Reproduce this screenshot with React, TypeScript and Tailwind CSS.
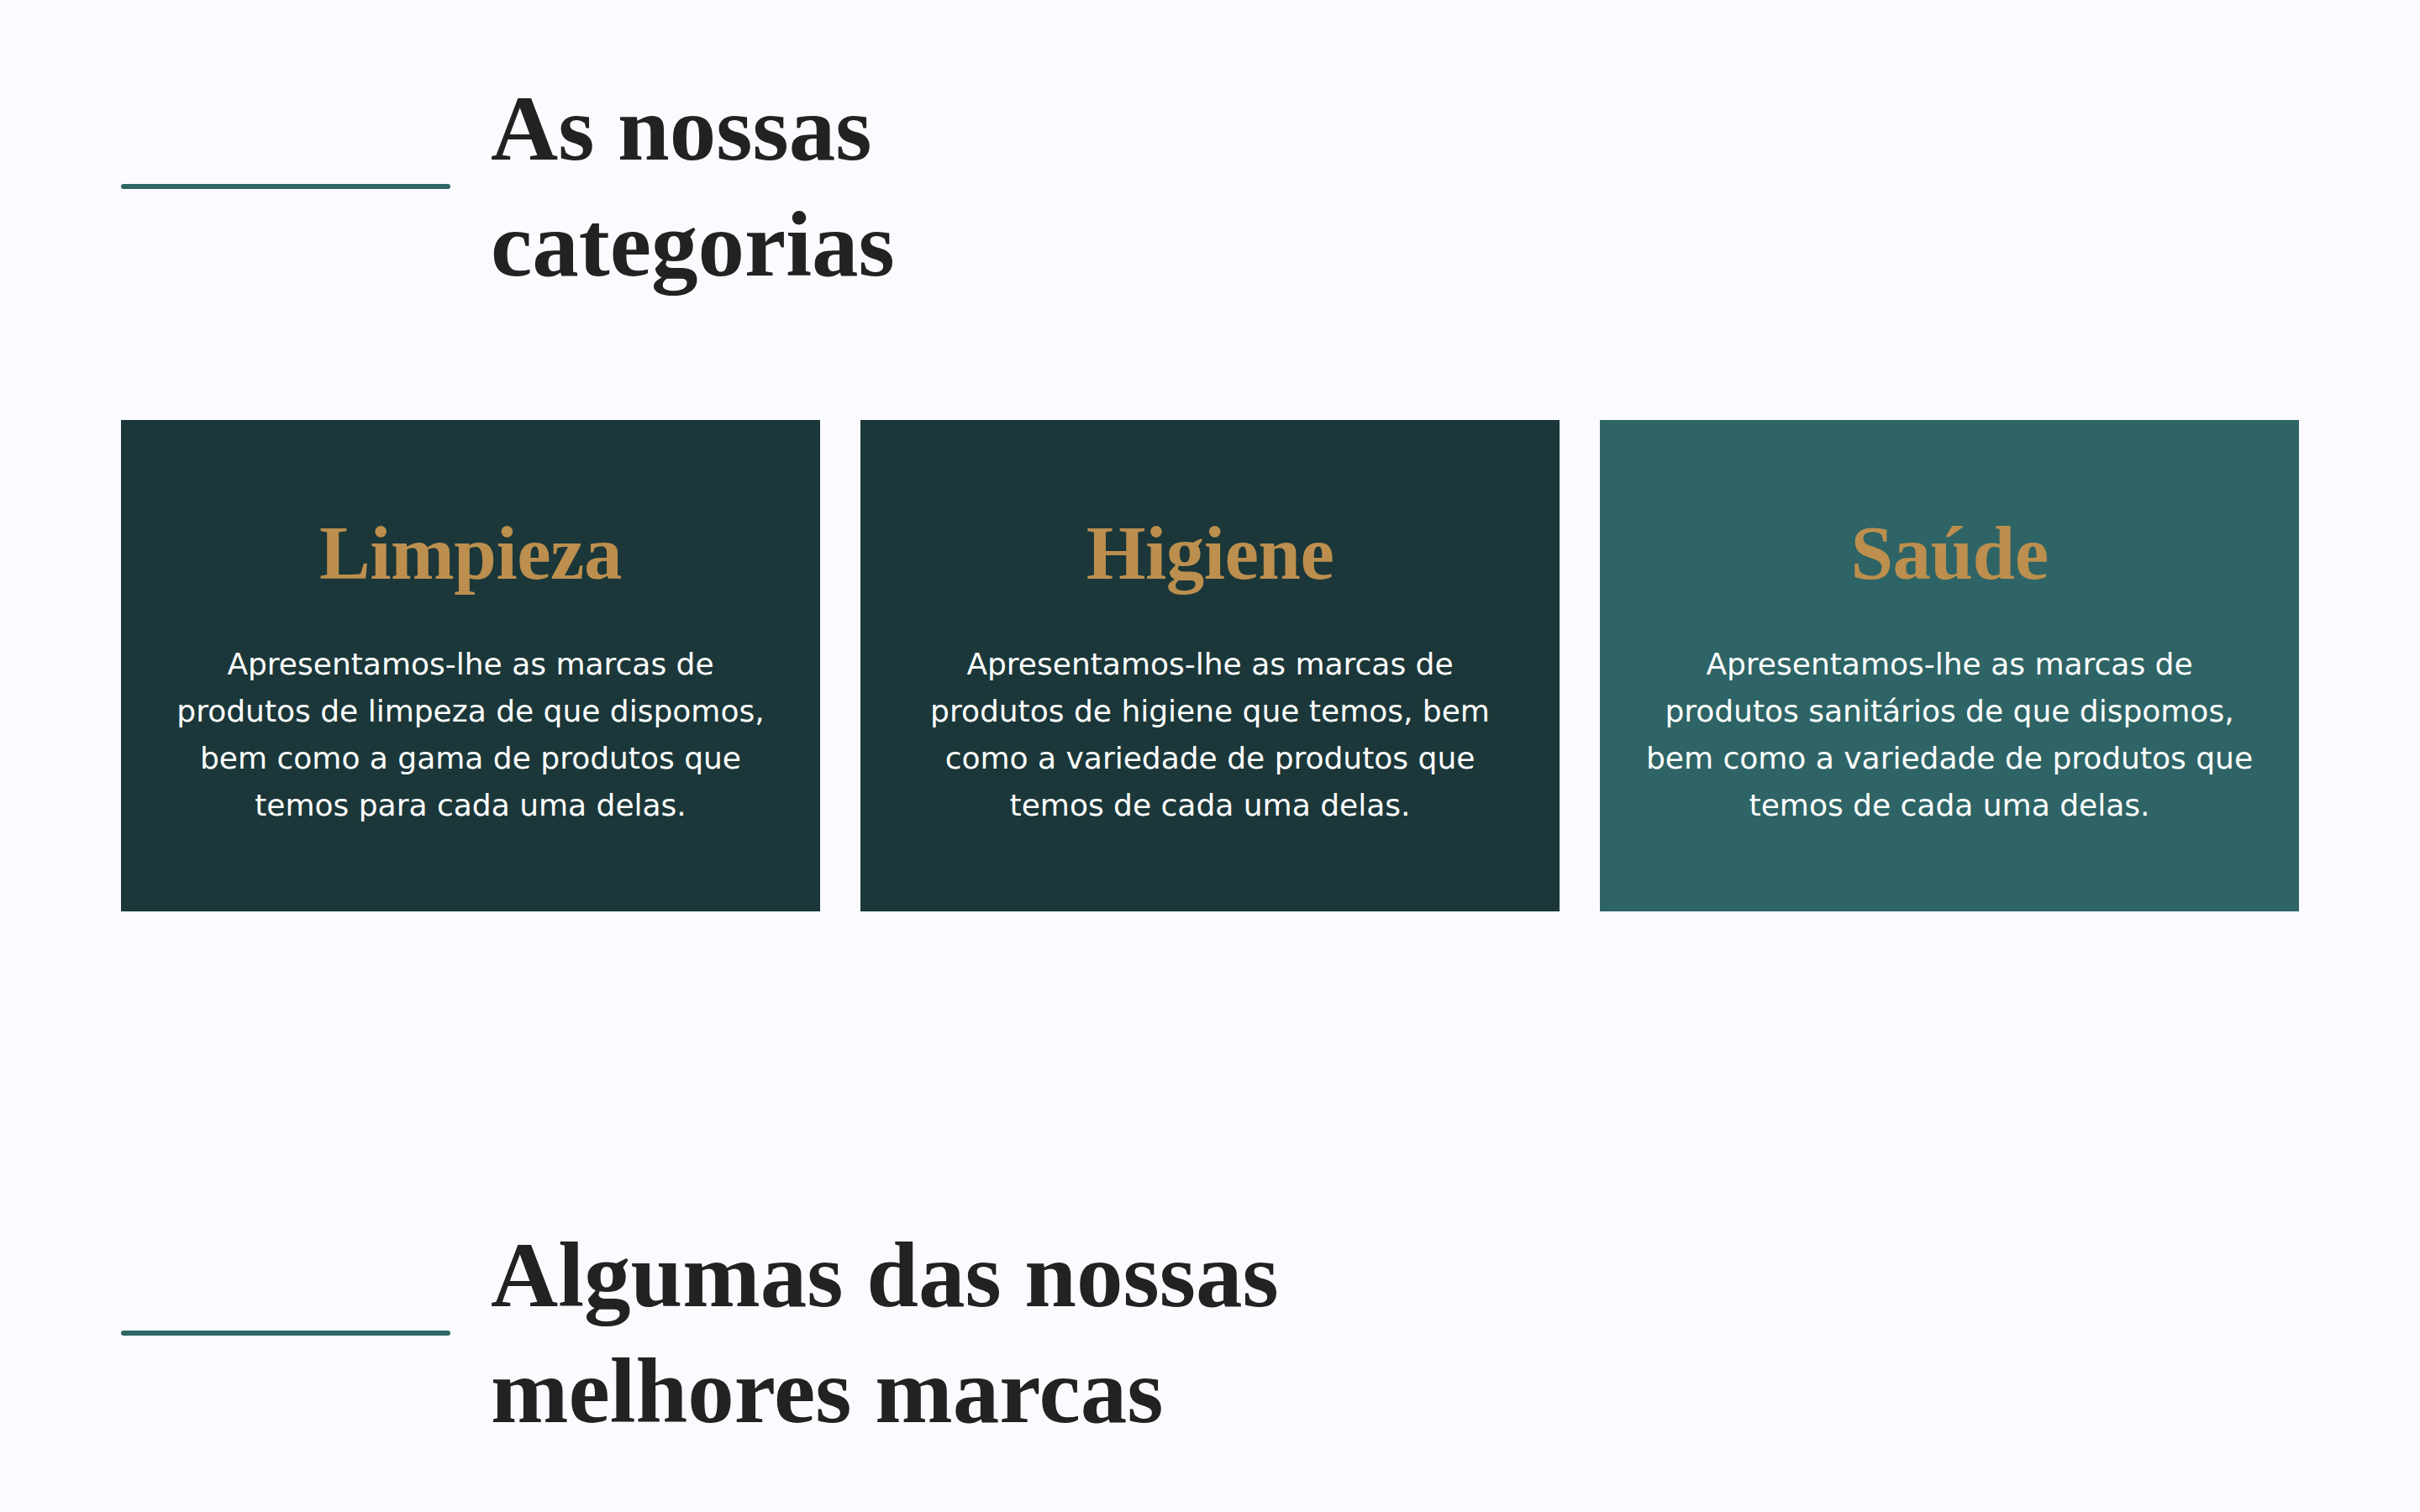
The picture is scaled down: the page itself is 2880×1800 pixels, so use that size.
import React from "react";

const serif = "font-['Liberation_Serif',serif]";

function SectionHeading({ lines }: { lines: string[] }) {
  return (
    <div className="flex items-center">
      <div className="h-[6px] w-[392px] shrink-0 rounded-full bg-[#2f6666]" />
      <h2
        className={`${serif} ml-[48px] text-[111px] font-bold leading-[138px] tracking-[0px] text-[#222222]`}
      >
        {lines.map((l, i) => (
          <span key={i} className="block">
            {l}
          </span>
        ))}
      </h2>
    </div>
  );
}

function Card({
  title,
  lines,
  bg,
}: {
  title: string;
  lines: string[];
  bg: string;
}) {
  return (
    <div className={`${bg} flex flex-col items-center pt-[104px] pb-[98px] text-center`}>
      <h3
        className={`${serif} text-[91px] font-bold leading-[109px] tracking-[-0.5px] text-[#bc8f4e]`}
      >
        {title}
      </h3>
      <p className="mt-[50px] font-['DejaVu_Sans',sans-serif] text-[36px] leading-[56px] text-white">
        {lines.map((l, i) => (
          <span key={i} className="block whitespace-nowrap">
            {l}
          </span>
        ))}
      </p>
    </div>
  );
}

export default function App() {
  return (
    <div className="min-h-screen bg-[#fbfbff]">
      <div className="mx-auto w-[2592px] pt-[84px]">
        <SectionHeading lines={["As nossas", "categorias"]} />
        <div className="mt-[140px] grid grid-cols-3 gap-[48px]">
          <Card
            bg="bg-[#1b3739]"
            title="Limpieza"
            lines={[
              "Apresentamos-lhe as marcas de",
              "produtos de limpeza de que dispomos,",
              "bem como a gama de produtos que",
              "temos para cada uma delas.",
            ]}
          />
          <Card
            bg="bg-[#1b3739]"
            title="Higiene"
            lines={[
              "Apresentamos-lhe as marcas de",
              "produtos de higiene que temos, bem",
              "como a variedade de produtos que",
              "temos de cada uma delas.",
            ]}
          />
          <Card
            bg="bg-[#2e6465]"
            title="Saúde"
            lines={[
              "Apresentamos-lhe as marcas de",
              "produtos sanitários de que dispomos,",
              "bem como a variedade de produtos que",
              "temos de cada uma delas.",
            ]}
          />
        </div>
        <div className="mt-[364px] pb-[80px]">
          <SectionHeading lines={["Algumas das nossas", "melhores marcas"]} />
        </div>
      </div>
    </div>
  );
}
